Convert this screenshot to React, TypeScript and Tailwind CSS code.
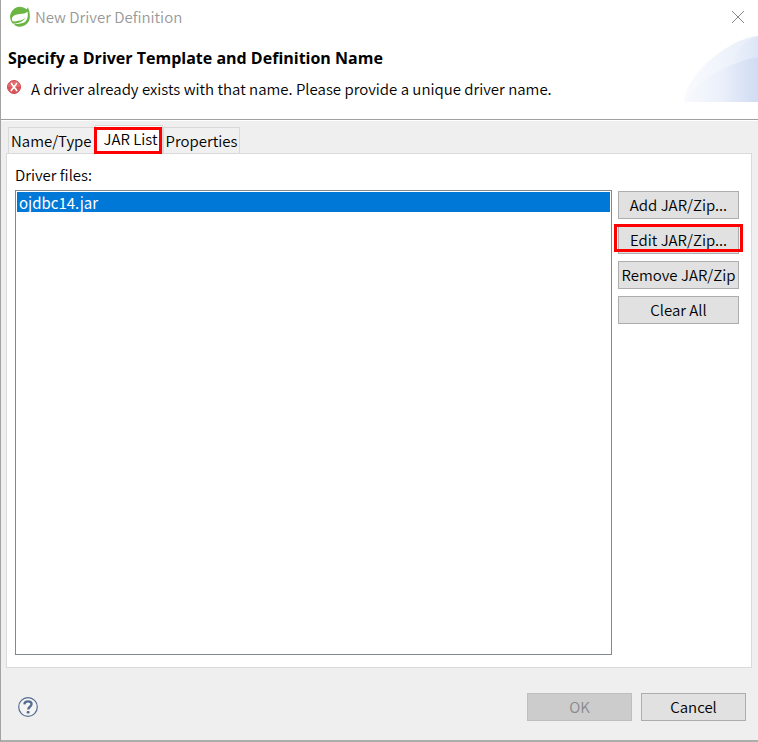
import { useState } from "react";
import type { ReactNode } from "react";

function SpringIcon() {
  return (
    <svg width="22" height="22" viewBox="0 0 22 22" aria-hidden="true">
      <path
        d="M18.800 1.200c-.4.900-.9 1.500-1.400 2A9.900 9.900 0 1 0 20.800 12C21.100 8.300 20.500 4.500 18.800 1.200Z"
        fill="#6cb544"
      />
      <path
        d="M18.500 5.800c.8 3.500.3 7.200-1.900 9.400-2.800 2.800-7.200 2.400-12.100 2.900 6.300-1.400 9.900-2.900 12.100-6.400-2.700 2.500-6.300 2.800-9.700 3.600-3 .7-4.300-.3-3.900-2.700.6-3.400 4.200-4.200 7.700-4.600 3.200-.3 5.900-.5 7.800-2.200Z"
        fill="#fff"
      />
      <circle cx="4.800" cy="18.200" r=".8" fill="#fff" />
    </svg>
  );
}

function ErrorIcon() {
  return (
    <svg width="14" height="14" viewBox="0 0 14 14" role="img" aria-label="Error">
      <circle cx="7" cy="7" r="6.500" fill="#d95358" stroke="#cf4a50" />
      <path d="M.8 7a6.200 6.200 0 0 1 12.400 0Z" fill="#e06a6d" />
      <path
        d="M4.500 3.500c.8 2 4 5 5.200 7M9.500 3.500C8.700 5.500 5.500 8.500 4.300 10.500"
        fill="none"
        stroke="#fff"
        strokeWidth="1.700"
        strokeLinecap="round"
      />
    </svg>
  );
}

function HelpIcon() {
  return (
    <svg width="20" height="20" viewBox="0 0 20 20" aria-hidden="true">
      <circle cx="10" cy="10" r="9.300" fill="#f4f4f4" stroke="#566b91" strokeWidth="1.200" />
      <path
        d="M6.400 7.400C6.500 5.300 8 4.400 10 4.400c2.200 0 3.600 1 3.600 2.700 0 2.600-3.300 2.700-3.400 5.400"
        fill="none"
        stroke="#566b91"
        strokeWidth="2.300"
      />
      <rect x="8.600" y="14" width="3" height="2.400" rx="1" fill="#566b91" />
    </svg>
  );
}

function BannerArt() {
  return (
    <svg width="74" height="66" viewBox="0 0 74 66" aria-hidden="true">
      <defs>
        <linearGradient id="wing" x1="0" x2="1">
          <stop offset="0" stopColor="#fafbfe" />
          <stop offset="1" stopColor="#e6edf9" />
        </linearGradient>
        <linearGradient id="tip" x1="0" x2="1">
          <stop offset="0" stopColor="#f0f4fc" />
          <stop offset="1" stopColor="#dce6f7" />
        </linearGradient>
        <linearGradient id="base" x1="0" x2="1">
          <stop offset="0" stopColor="#f9fafe" />
          <stop offset=".5" stopColor="#ebf0fa" />
          <stop offset="1" stopColor="#d0dcf3" />
        </linearGradient>
      </defs>
      <path d="M0 66C0 40 45 2 74 0v66Z" fill="url(#wing)" />
      <path d="M74 0C62 4 50 15 43 32L74 22Z" fill="url(#tip)" />
      <path d="M0 66C8 46 48 25 74 21v45Z" fill="url(#base)" />
    </svg>
  );
}

function PushButton({ children, disabled }: { children: ReactNode; disabled?: boolean }) {
  return (
    <button
      type="button"
      disabled={disabled}
      className="h-7 w-full border border-[#adadad] bg-[#e1e1e1] whitespace-nowrap text-black disabled:border-[#bfbfbf] disabled:bg-[#cccccc] disabled:text-[#8a8a8a]"
    >
      {children}
    </button>
  );
}

function Tab({ label, selected, onSelect }: { label: string; selected: boolean; onSelect: () => void }) {
  return (
    <button
      type="button"
      role="tab"
      aria-selected={selected}
      onClick={onSelect}
      className={
        selected
          ? "h-7 border border-b-0 border-[#d9d9d9] bg-white pr-1 pb-[2px] pl-2"
          : "h-[26px] border border-b-0 border-[#d9d9d9] bg-[#f0f0f0] px-[2px]"
      }
    >
      {label}
    </button>
  );
}

export default function App() {
  const [tab, setTab] = useState("JAR List");
  const [file, setFile] = useState("ojdbc14.jar");

  return (
    <div className="flex min-h-screen flex-col border-l border-[#a3a3a3] bg-[#efefef] font-['Noto_Sans_CJK_KR',sans-serif] text-[15px] leading-5 font-[350] text-black">
      <div className="flex flex-1 flex-col border-b-2 border-[#acacac]">
        <header className="relative h-[120px] border-b border-[#a0a0a0] bg-white">
          <div className="flex h-[34px] items-center justify-between pr-[13px] pl-2">
            <div className="flex items-center gap-1 text-[#999999]">
              <SpringIcon />
              <span>New Driver Definition</span>
            </div>
            <button type="button" aria-label="Close">
              <svg width="14" height="14" viewBox="0 0 14 14" fill="none" stroke="#888888" aria-hidden="true">
                <path d="m1 1 12 12M13 1 1 13" />
              </svg>
            </button>
          </div>
          <h1 className="mt-[14px] pl-[7px] font-['Open_Sans',sans-serif] text-base leading-5 font-bold">
            Specify a Driver Template and Definition Name
          </h1>
          <div className="mt-[11px] flex gap-[10px] pl-[6px]">
            <div className="pt-px">
              <ErrorIcon />
            </div>
            <p>A driver already exists with that name. Please provide a unique driver name.</p>
          </div>
          <div className="absolute top-9 right-0">
            <BannerArt />
          </div>
        </header>

        <main className="flex flex-1 flex-col border-t border-white pr-[6px] pl-[5px]">
          <div role="tablist" className="flex h-8 items-end pl-[2px]">
            <Tab label="Name/Type" selected={tab === "Name/Type"} onSelect={() => setTab("Name/Type")} />
            <div className="relative flex">
              <Tab label="JAR List" selected={tab === "JAR List"} onSelect={() => setTab("JAR List")} />
              <span className="pointer-events-none absolute top-[2px] right-px -bottom-px -left-px border-3 border-[#ff0000]" />
            </div>
            <Tab label="Properties" selected={tab === "Properties"} onSelect={() => setTab("Properties")} />
          </div>
          <section role="tabpanel" className="flex flex-1 flex-col border border-[#dadada] bg-white pt-[11px] pr-3 pb-3 pl-2">
            <label htmlFor="driver-files">Driver files:</label>
            <div className="mt-[5px] flex flex-1 gap-[6px]">
              <select
                id="driver-files"
                size={2}
                value={file}
                onChange={(event) => setFile(event.target.value)}
                className="min-w-0 flex-1 overflow-hidden rounded-none border border-[#828790] bg-white p-px outline-none"
              >
                <option
                  value="ojdbc14.jar"
                  className="h-5 min-h-0 p-0 pl-[2px] leading-[19px] checked:bg-[#0078d7]! checked:bg-linear-to-r checked:from-[#0078d7] checked:to-[#0078d7] checked:text-white!"
                >
                  ojdbc14.jar
                </option>
              </select>
              <div className="flex w-[121px] flex-col gap-[7px] pt-px">
                <PushButton>Add JAR/Zip...</PushButton>
                <div className="relative">
                  <PushButton>Edit JAR/Zip...</PushButton>
                  <span className="pointer-events-none absolute -inset-x-1 -top-[2px] bottom-[2px] border-3 border-[#ff0000]" />
                </div>
                <PushButton>Remove JAR/Zip</PushButton>
                <PushButton>Clear All</PushButton>
              </div>
            </div>
          </section>
        </main>

        <footer className="flex items-center justify-between pt-[25px] pr-3 pb-[19px] pl-[17px]">
          <button type="button" aria-label="Help">
            <HelpIcon />
          </button>
          <div className="flex gap-[9px]">
            <div className="w-[105px]">
              <PushButton disabled>OK</PushButton>
            </div>
            <div className="w-[105px]">
              <PushButton>Cancel</PushButton>
            </div>
          </div>
        </footer>
      </div>
    </div>
  );
}
